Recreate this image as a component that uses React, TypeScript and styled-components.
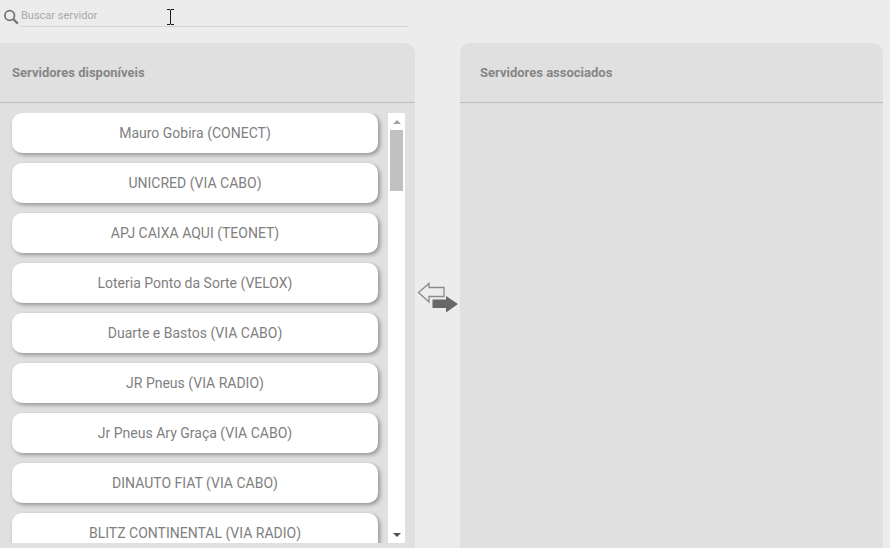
import React from "react"
import styled, {createGlobalStyle} from "styled-components"

const servers = [
  "Mauro Gobira (CONECT)",
  "UNICRED (VIA CABO)",
  "APJ CAIXA AQUI (TEONET)",
  "Loteria Ponto da Sorte (VELOX)",
  "Duarte e Bastos (VIA CABO)",
  "JR Pneus (VIA RADIO)",
  "Jr Pneus Ary Graça (VIA CABO)",
  "DINAUTO FIAT (VIA CABO)",
  "BLITZ CONTINENTAL (VIA RADIO)",
]

const Global = createGlobalStyle`
html, body {
  margin : 0;
  height : 100%;
  overflow : hidden;
  background-color : #ececec;
  font-family : Roboto, "Liberation Sans", sans-serif;
}
`

const Page = styled.div`
width : 890px;
height : 548px;
overflow : hidden;
display : flex;
flex-direction : column;
`

const SearchRow = styled.div`
height : 43px;
flex : none;
display : flex;
align-items : flex-start;
padding : 8px 0 0 3px;
box-sizing : border-box;
position : relative;
`

const SearchIcon = styled.svg`
flex : none;
margin-top : 1px;
`

const SearchInput = styled.div`
width : 388px;
height : 19px;
margin-left : 1px;
padding-left : 1px;
box-sizing : border-box;
border-bottom : 1px solid #d3d3d3;
font-size : 11px;
line-height : 15px;
color : #a9a9a9;
`

//mouse pointer caught in the screenshot
const TextCursor = styled.svg`
position : absolute;
left : 167px;
top : 9px;
`

const Columns = styled.div`
flex : 1;
display : flex;
min-height : 0;
`

const Panel = styled.section<{$width:number; $radius:string}>`
width : ${props => props.$width}px;
flex : none;
background-color : #e0e0e0;
border-radius : ${props => props.$radius};
display : flex;
flex-direction : column;
`

const PanelHeader = styled.header<{$indent:number}>`
height : 60px;
flex : none;
box-sizing : border-box;
padding-left : ${props => props.$indent}px;
border-bottom : 1px solid #bdbdbd;
display : flex;
align-items : center;
font-size : 13px;
font-weight : 700;
color : #868686;
`

const ListArea = styled.div`
display : flex;
height : 430px;
margin-top : 10px;
padding-left : 12px;
overflow : hidden;
`

const List = styled.ul`
list-style : none;
margin : 0;
padding : 0;
width : 366px;
display : flex;
flex-direction : column;
gap : 10px;
`

const Item = styled.li`
flex : none;
height : 40px;
background-color : #fff;
border-radius : 10px;
box-shadow : 2px 2px 4px rgba(0, 0, 0, 0.35);
display : flex;
align-items : center;
justify-content : center;
font-size : 14px;
color : #808080;
`

const Scrollbar = styled.div`
width : 17px;
margin-left : 10px;
background-color : #fff;
display : flex;
flex-direction : column;
align-items : center;
`

const ArrowBox = styled.div`
height : 17px;
flex : none;
display : flex;
align-items : center;
justify-content : center;
`

const Thumb = styled.div`
width : 13px;
height : 61px;
flex : none;
background-color : #c1c1c1;
`

const Track = styled.div`
flex : 1;
`

const Swap = styled.div`
width : 45px;
flex : none;
display : flex;
padding : 239px 0 0 2px;
box-sizing : border-box;
`

function App() {
  return (
    <Page>
      <Global />
      <SearchRow>
        <SearchIcon width="16" height="16" viewBox="0 0 16 16" fill="none" stroke="#737373">
          <circle cx="6.700" cy="6.500" r="4.800" strokeWidth="1.700" />
          <path d="M10.200 10l4.600 4.600" strokeWidth="2.200" />
        </SearchIcon>
        <SearchInput>Buscar servidor</SearchInput>
        <TextCursor width="8" height="16" viewBox="0 0 8 16" fill="none" stroke="#1a1a1a">
          <path d="M0 .5h3l.5.500.5-.500h3M3.500 1v14M0 15.500h3l.5-.500.5.500h3" />
        </TextCursor>
      </SearchRow>
      <Columns>
        <Panel $width={415} $radius="0 10px 0 0">
          <PanelHeader $indent={12}>Servidores disponíveis</PanelHeader>
          <ListArea>
            <List>
              {servers.map(name => <Item key={name}>{name}</Item>)}
            </List>
            <Scrollbar>
              <ArrowBox>
                <svg width="8" height="4" viewBox="0 0 8 4"><path d="M0 4L4 0l4 4z" fill="#a3a3a3" /></svg>
              </ArrowBox>
              <Thumb />
              <Track />
              <ArrowBox>
                <svg width="8" height="4" viewBox="0 0 8 4"><path d="M0 0l4 4 4-4z" fill="#505050" /></svg>
              </ArrowBox>
            </Scrollbar>
          </ListArea>
        </Panel>
        <Swap>
          <svg width="42" height="34" viewBox="0 0 42 34">
            <path d="M1.500 10.500L12 1.500v4h15v9H12V20z" fill="none" stroke="#8a8a8a" strokeWidth="1.300" />
            <path d="M15.500 17.500H29V14l12 8-12 8.500V26H15.500z" fill="#676767" />
          </svg>
        </Swap>
        <Panel $width={423} $radius="10px 10px 0 0">
          <PanelHeader $indent={20}>Servidores associados</PanelHeader>
        </Panel>
      </Columns>
    </Page>
  )
}

export default App;
